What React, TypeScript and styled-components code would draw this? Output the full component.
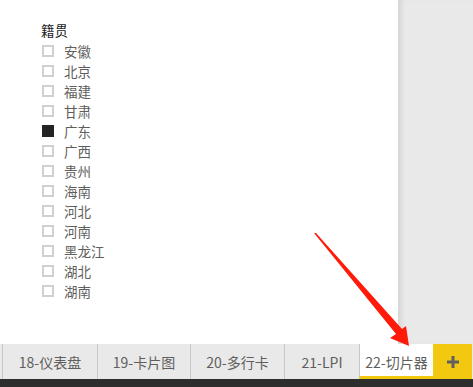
import styled, { createGlobalStyle } from "styled-components";

const GlobalStyle = createGlobalStyle`
    html, body {
        margin: 0;
        padding: 0;
        background: #ffffff;
        font-family: "Noto Sans CJK SC", "Noto Sans", sans-serif;
    }
`;

const Page = styled.div`
    position: relative;
    width: 473px;
    height: 387px;
    display: flex;
    flex-direction: column;
    overflow: hidden;
`;

const Main = styled.div`
    display: flex;
    height: 344px;
`;

const Canvas = styled.div`
    flex: 1;
    background: #ffffff;
    padding: 20px 0 0 41px;
`;

const SidePanel = styled.div`
    width: 75px;
    background: #e9e9e9;
    box-shadow: inset 6px 0 6px -4px rgba(0, 0, 0, 0.12);
`;

const Title = styled.div`
    font-size: 13.5px;
    line-height: 20px;
    color: #222;
    margin-bottom: 1px;
`;

const List = styled.ul`
    list-style: none;
    margin: 0;
    padding: 0;
`;

const Item = styled.li`
    display: flex;
    align-items: center;
    height: 20px;
    font-size: 13.5px;
    color: #605e5c;
`;

const Box = styled.span<{ $checked?: boolean }>`
    box-sizing: border-box;
    width: 12px;
    height: 12px;
    margin-left: 1px;
    margin-right: 10px;
    border: 2px solid ${({ $checked }) => ($checked ? "#252423" : "#d0d0d0")};
    background: ${({ $checked }) => ($checked ? "#252423" : "#ffffff")};
`;

const TabBar = styled.div`
    display: flex;
    height: 35px;
    background: #e9e9e9;
    padding-left: 2px;
`;

const Tab = styled.div<{ $width: number; $active?: boolean }>`
    box-sizing: border-box;
    width: ${({ $width }) => $width}px;
    display: flex;
    align-items: center;
    justify-content: center;
    font-size: 14px;
    color: #605e5c;
    border-left: 1px solid #c8c8c8;
    background: ${({ $active }) => ($active ? "#ffffff" : "transparent")};
    border-bottom: ${({ $active }) => ($active ? "3px solid #f2c811" : "none")};
    padding-top: ${({ $active }) => ($active ? "3px" : "0")};
`;

const AddTab = styled.div`
    width: 39px;
    background: #f2c811;
    display: flex;
    align-items: center;
    justify-content: center;
`;

const BottomStrip = styled.div`
    flex: 1;
    background: #2d2d2d;
`;

const Arrow = styled.svg`
    position: absolute;
    left: 0;
    top: 0;
    pointer-events: none;
`;

const provinces = [
    "安徽", "北京", "福建", "甘肃", "广东", "广西", "贵州",
    "海南", "河北", "河南", "黑龙江", "湖北", "湖南",
];

const tabs = [
    { label: "18-仪表盘", width: 95 },
    { label: "19-卡片图", width: 93 },
    { label: "20-多行卡", width: 94 },
    { label: "21-LPI", width: 75 },
    { label: "22-切片器", width: 74, active: true },
];

export default function App() {
    return (
        <Page>
            <GlobalStyle />
            <Main>
                <Canvas>
                    <Title>籍贯</Title>
                    <List>
                        {provinces.map((p) => (
                            <Item key={p}>
                                <Box $checked={p === "广东"} />
                                {p}
                            </Item>
                        ))}
                    </List>
                </Canvas>
                <SidePanel />
            </Main>
            <TabBar>
                {tabs.map((t) => (
                    <Tab key={t.label} $width={t.width} $active={t.active}>
                        {t.label}
                    </Tab>
                ))}
                <AddTab>
                    <svg width="12" height="12" viewBox="0 0 12 12">
                        <path d="M6 0V12M0 6H12" stroke="#5f5f5f" strokeWidth="3" />
                    </svg>
                </AddTab>
            </TabBar>
            <BottomStrip />
            <Arrow width="473" height="387" viewBox="0 0 473 387">
                <polygon
                    points="314,233 316,233 402,329 406,326 409,346 390,338 396,334"
                    fill="#ff1a0a"
                />
            </Arrow>
        </Page>
    );
}
